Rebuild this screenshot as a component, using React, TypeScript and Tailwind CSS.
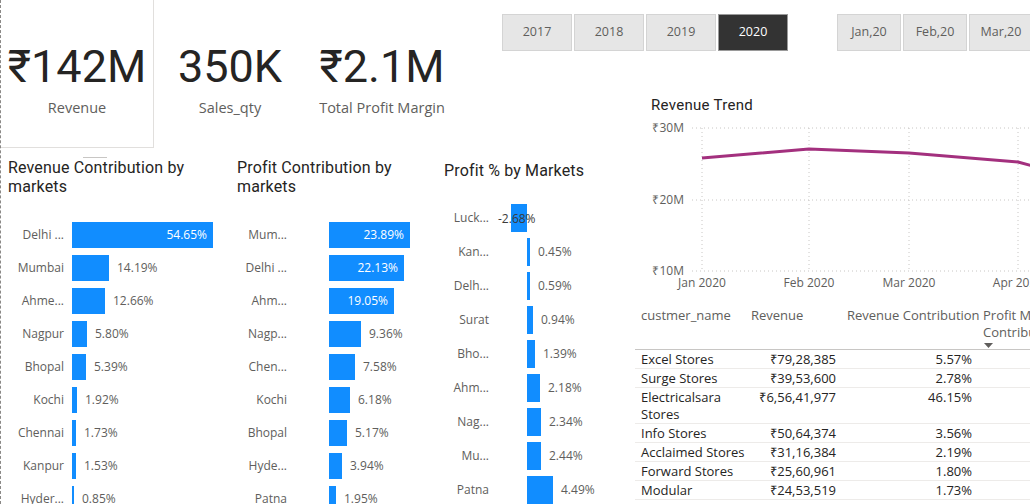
import React from "react";

const sans = "font-['Segoe_UI','Open_Sans',sans-serif]";
const din = "font-['Roboto','DejaVu_Sans',sans-serif]";

const revenueRows = [
  { label: "Delhi ...", value: 54.65 },
  { label: "Mumbai", value: 14.19 },
  { label: "Ahme...", value: 12.66 },
  { label: "Nagpur", value: 5.8 },
  { label: "Bhopal", value: 5.39 },
  { label: "Kochi", value: 1.92 },
  { label: "Chennai", value: 1.73 },
  { label: "Kanpur", value: 1.53 },
  { label: "Hyder...", value: 0.85 },
];

const profitRows = [
  { label: "Mum...", value: 23.89 },
  { label: "Delhi ...", value: 22.13 },
  { label: "Ahm...", value: 19.05 },
  { label: "Nagp...", value: 9.36 },
  { label: "Chen...", value: 7.58 },
  { label: "Kochi", value: 6.18 },
  { label: "Bhopal", value: 5.17 },
  { label: "Hyde...", value: 3.94 },
  { label: "Patna", value: 1.95 },
];

const pctRows = [
  { label: "Luck...", value: -2.68 },
  { label: "Kan...", value: 0.45 },
  { label: "Delh...", value: 0.59 },
  { label: "Surat", value: 0.94 },
  { label: "Bho...", value: 1.39 },
  { label: "Ahm...", value: 2.18 },
  { label: "Nag...", value: 2.34 },
  { label: "Mu...", value: 2.44 },
  { label: "Patna", value: 4.49 },
];

const customers = [
  { name: "Excel Stores", rev: "₹79,28,385", pct: "5.57%" },
  { name: "Surge Stores", rev: "₹39,53,600", pct: "2.78%" },
  { name: "Electricalsara Stores", rev: "₹6,56,41,977", pct: "46.15%" },
  { name: "Info Stores", rev: "₹50,64,374", pct: "3.56%" },
  { name: "Acclaimed Stores", rev: "₹31,16,384", pct: "2.19%" },
  { name: "Forward Stores", rev: "₹25,60,961", pct: "1.80%" },
  { name: "Modular", rev: "₹24,53,519", pct: "1.73%" },
  { name: "Lotus", rev: "₹19,54,221", pct: "1.37%" },
];

type Row = { label: string; value: number };

const Kpi = ({ value, label, className }: { value: string; label: string; className: string }) => (
  <div className={`flex flex-col items-center ${className}`}>
    <div className={`${din} text-[45px] leading-[56px] text-[#252423]`}>{value}</div>
    <div className={`${sans} text-[14.5px] leading-[20px] text-[#605e5c] mt-[3px]`}>{label}</div>
  </div>
);

const HBar = ({
  title,
  rows,
  scale,
  labelW,
  gapW,
  inside,
}: {
  title: string[];
  rows: Row[];
  scale: number;
  labelW: string;
  gapW: string;
  inside: number;
}) => (
  <div className="flex flex-col">
    <div className={`${din} text-[16px] leading-[19px] text-[#252423] pl-[7px] pt-[8px] h-[68px] tracking-[0.15px]`}>
      {title.map((t) => (
        <div key={t}>{t}</div>
      ))}
    </div>
    <div className={`flex flex-col ${sans} text-[12px] text-[#605e5c]`}>
      {rows.map((r) => {
        const w = Math.round(r.value * scale);
        const isIn = r.value >= inside;
        return (
          <div key={r.label} className="flex items-center h-[33px]">
            <div className={`${labelW} text-right shrink-0`}>{r.label}</div>
            <div className={`${gapW} shrink-0`} />
            <div className="h-[26px] bg-[#118dff] flex items-center justify-end shrink-0" style={{ width: w }}>
              {isIn && <span className="text-white pr-[6px]">{r.value.toFixed(2)}%</span>}
            </div>
            {!isIn && <span className="ml-[8px]">{r.value.toFixed(2)}%</span>}
          </div>
        );
      })}
    </div>
  </div>
);

const PctChart = () => (
  <div className="flex flex-col">
    <div className={`${din} text-[16px] leading-[19px] text-[#252423] pl-[7px] pt-[11px] h-[51px] tracking-[0.15px]`}>
      Profit % by Markets
    </div>
    <div className={`flex flex-col ${sans} text-[12px] text-[#605e5c]`}>
      {pctRows.map((r) => {
        const w = Math.round(Math.abs(r.value) * 5.9);
        return (
          <div key={r.label} className="flex items-center h-[34px]">
            <div className="w-[52px] text-right shrink-0">{r.label}</div>
            <div className="w-[38px] shrink-0 flex justify-end relative">
              {r.value < 0 && (
                <>
                  <div className="h-[28px] bg-[#118dff]" style={{ width: w }} />
                  <span className="absolute left-[9px] top-[6px] text-[#3b3a39]">{r.value.toFixed(2)}%</span>
                </>
              )}
            </div>
            {r.value >= 0 && (
              <>
                <div className="h-[28px] bg-[#118dff] shrink-0" style={{ width: Math.max(w, 3) }} />
                <span className="ml-[8px]">{r.value.toFixed(2)}%</span>
              </>
            )}
          </div>
        );
      })}
    </div>
  </div>
);

const TrendChart = () => {
  const gy = [38, 110, 181];
  const gx = [82, 189, 289, 398];
  const months = ["Jan 2020", "Feb 2020", "Mar 2020", "Apr 2020"];
  return (
    <div className="flex flex-col h-full">
      <div className={`${din} text-[15px] leading-[20px] text-[#252423] pl-[31px] pt-[5px] h-[28px] tracking-[0.3px]`}>
        Revenue Trend
      </div>
      <svg width="410" height="177" viewBox="0 28 410 177" className={`${sans} block`}>
        {gy.map((y) => (
          <line key={y} x1={72} x2={410} y1={y} y2={y} stroke="#c8c6c4" strokeDasharray="1 3" />
        ))}
        {gx.map((x) => (
          <line key={x} x1={x} x2={x} y1={38} y2={181} stroke="#c8c6c4" strokeDasharray="1 3" />
        ))}
        {["₹30M", "₹20M", "₹10M"].map((t, i) => (
          <text key={t} x={64} y={gy[i] + 4} textAnchor="end" fontSize="12" fill="#605e5c">
            {t}
          </text>
        ))}
        {months.map((m, i) => (
          <text key={m} x={gx[i]} y={197} textAnchor="middle" fontSize="12" fill="#605e5c">
            {m}
          </text>
        ))}
        <polyline
          points="82,68 189,59 289,63 398,72 420,78"
          fill="none"
          stroke="#a3307e"
          strokeWidth="3"
          strokeLinejoin="round"
        />
      </svg>
    </div>
  );
};

const CustTable = () => (
  <div className={`${sans} text-[13px] text-[#252423] pl-[15px] pt-[12px]`}>
    <div className="grid grid-cols-[110px_97px_136px_60px] border-b border-[#c8c6c4] h-[43px] text-[#605e5c] leading-[17px]">
      <div className="pl-[6px]">custmer_name</div>
      <div className="pl-[6px]">Revenue</div>
      <div className="pl-[5px] whitespace-nowrap">Revenue Contribution</div>
      <div className="pl-[5px] whitespace-nowrap relative">
        <div>Profit Margin</div>
        <div>Contribution</div>
        <svg width="9" height="6" className="absolute left-[6px] top-[36px]">
          <polygon points="0,0 9,0 4.5,5" fill="#605e5c" />
        </svg>
      </div>
    </div>
    {customers.map((c) => (
      <div key={c.name} className="grid grid-cols-[110px_97px_136px_60px] border-b border-[#edebe9] leading-[17px] pt-[1px]">
        <div className="pl-[6px]">{c.name}</div>
        <div className="text-right pr-[6px]">{c.rev}</div>
        <div className="text-right pr-[6px]">{c.pct}</div>
        <div />
      </div>
    ))}
  </div>
);

const Slicer = ({ items, active, w }: { items: string[]; active?: string; w: string }) => (
  <div className="flex gap-[2px]">
    {items.map((t) => (
      <div
        key={t}
        className={`${w} h-[37px] shrink-0 flex items-center justify-center border ${sans} text-[12.5px] ${
          t === active ? "bg-[#333333] border-[#9a9a9a] text-white" : "bg-[#e6e6e6] border-[#d4d4d4] text-[#605e5c]"
        }`}
      >
        {t}
      </div>
    ))}
  </div>
);

export default function App() {
  return (
    <div className="w-[1030px] h-[504px] overflow-hidden bg-white border-l border-dashed border-[#8a8886] grid grid-cols-[459px_160px_410px] grid-rows-[90px_60px_145px_209px]">
      <div className="row-span-2 flex items-start">
        <div className="w-[153px] h-[148px] border-r border-b border-[#e1dfdd] flex justify-center">
          <Kpi value="₹142M" label="Revenue" className="pt-[39px]" />
        </div>
        <Kpi value="350K" label="Sales_qty" className="pt-[39px] w-[152px]" />
        <Kpi value="₹2.1M" label="Total Profit Margin" className="pt-[39px] w-[152px]" />
      </div>
      <div className="col-span-2 flex items-start pt-[14px] pl-[42px]">
        <Slicer items={["2017", "2018", "2019", "2020"]} active="2020" w="w-[70px]" />
        <div className="w-[49px] shrink-0" />
        <Slicer items={["Jan,20", "Feb,20", "Mar,20", "Apr,20"]} w="w-[64px]" />
      </div>
      <div className="col-start-3 row-start-2 row-span-2">
        <TrendChart />
      </div>
      <div className="col-start-1 col-span-2 row-start-3 row-span-2 flex relative">
        <div className="absolute left-[82px] top-[7px] w-[24px] h-[1px] bg-[#c8c6c4]" />
        <div className="w-[229px] shrink-0">
          <HBar title={["Revenue Contribution by", "markets"]} rows={revenueRows} scale={2.58} labelW="w-[63px]" gapW="w-[8px]" inside={50} />
        </div>
        <div className="w-[207px] shrink-0">
          <HBar title={["Profit Contribution by", "markets"]} rows={profitRows} scale={3.39} labelW="w-[57px]" gapW="w-[42px]" inside={15} />
        </div>
        <div className="flex-1">
          <PctChart />
        </div>
      </div>
      <div className="col-start-3 row-start-4 overflow-hidden">
        <CustTable />
      </div>
    </div>
  );
}
